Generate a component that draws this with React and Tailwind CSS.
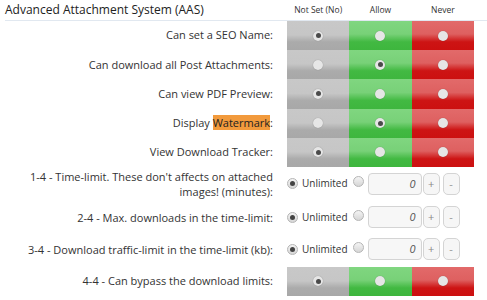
import React from "react";

const COLS = [
  { key: "no", bg: "bg-[linear-gradient(to_bottom,#c8c8c8_0%,#c6c6c6_48%,#ababab_72%,#a8a8a8_100%)]" },
  { key: "allow", bg: "bg-[linear-gradient(to_bottom,#80d680_0%,#78d178_45%,#42b942_72%,#3eb63e_100%)]" },
  { key: "never", bg: "bg-[linear-gradient(to_bottom,#e26a6a_0%,#de6060_45%,#cd1414_72%,#cc1010_100%)]" },
];

const PERMS = [
  { label: "Can set a SEO Name:", value: "no" },
  { label: "Can download all Post Attachments:", value: "allow" },
  { label: "Can view PDF Preview:", value: "no" },
  { label: "Display", mark: "Watermark", value: "allow" },
  { label: "View Download Tracker:", value: "no" },
];

const LIMITS = [
  { label: ["1-4 - Time-limit. These don't affects on attached", "images! (minutes):"], h: "h-[34px]" },
  { label: ["2-4 - Max. downloads in the time-limit:"], h: "h-[33px]" },
  { label: ["3-4 - Download traffic-limit in the time-limit (kb):"], h: "h-[31px]" },
];

const Dot = ({ on }) => (
  <span className="w-[10px] h-[10px] rounded-full bg-[#e6e6e6] shadow-[0_0_1px_rgba(0,0,0,0.35)] flex items-center justify-center">
    {on && <span className="w-[5px] h-[5px] rounded-full bg-[#4a4a4a]" />}
  </span>
);

const PermBar = ({ value }) => (
  <div className="flex w-[187px] h-full">
    {COLS.map((c) => (
      <div key={c.key} className={`flex-1 flex items-center justify-center ${c.bg}`}>
        <Dot on={c.key === value} />
      </div>
    ))}
  </div>
);

const Radio = ({ on }) => (
  <span className="w-[11px] h-[11px] rounded-full border border-[#b5b5b5] bg-[linear-gradient(to_bottom,#f4f4f4,#d6d6d6)] flex items-center justify-center">
    {on && <span className="w-[5px] h-[5px] rounded-full bg-[#444]" />}
  </span>
);

const LimitInput = () => (
  <div className="flex items-center">
    <Radio on />
    <span className="ml-[4px] text-[10px] text-[#333]">Unlimited</span>
    <span className="ml-[5px] -mt-[4px]">
      <Radio />
    </span>
    <div className="ml-[4px] w-[54px] h-[22px] rounded-[4px] border border-[#d4d4d4] bg-[#f7f7f7] flex items-center justify-end pr-[5px] text-[11px] italic text-[#555]">
      0
    </div>
    <div className="ml-px w-[17px] h-[22px] rounded-[5px] border border-[#d4d4d4] bg-[#f6f6f6] flex items-center justify-center text-[11px] text-[#888]">
      +
    </div>
    <div className="ml-[3px] w-[17px] h-[22px] rounded-[5px] border border-[#d4d4d4] bg-[#f6f6f6] flex items-center justify-center text-[11px] text-[#999]">
      -
    </div>
  </div>
);

export default function App() {
  return (
    <div className="w-[487px] h-[300px] bg-white font-['Open_Sans',sans-serif] text-[#333] overflow-hidden">
      {/* HEADER */}
      <div className="ml-[5px] h-[21px] flex border-b border-[#e1e8f0]">
        <div className="w-[282px] text-[12px] leading-[20px] text-[#222]">Advanced Attachment System (AAS)</div>
        <div className="flex w-[187px] text-[8.5px] leading-[20px] text-[#333]">
          <div className="flex-1 text-center">Not Set (No)</div>
          <div className="flex-1 text-center">Allow</div>
          <div className="flex-1 text-center">Never</div>
        </div>
      </div>

      {/* PERMISSIONS */}
      {PERMS.map((p) => (
        <div key={p.label} className="flex h-[29.2px]">
          <div className="w-[273px] flex items-center justify-end text-[11px]">
            {p.mark ? (
              <span>
                {p.label} <span className="bg-[#f29a3c] text-[#222]">{p.mark}</span>:
              </span>
            ) : (
              p.label
            )}
          </div>
          <div className="ml-[14px]">
            <PermBar value={p.value} />
          </div>
        </div>
      ))}

      {/* LIMITS */}
      {LIMITS.map((l, i) => (
        <div key={i} className={`flex items-center ${l.h}`}>
          <div className="w-[273px] text-right text-[11px] leading-[15px]">
            {l.label.map((t) => (
              <div key={t}>{t}</div>
            ))}
          </div>
          <div className="ml-[14px]">
            <LimitInput />
          </div>
        </div>
      ))}

      <div className="flex h-[29px] mt-[2px]">
        <div className="w-[273px] flex items-center justify-end text-[11px]">4-4 - Can bypass the download limits:</div>
        <div className="ml-[14px]">
          <PermBar value="no" />
        </div>
      </div>
    </div>
  );
}
